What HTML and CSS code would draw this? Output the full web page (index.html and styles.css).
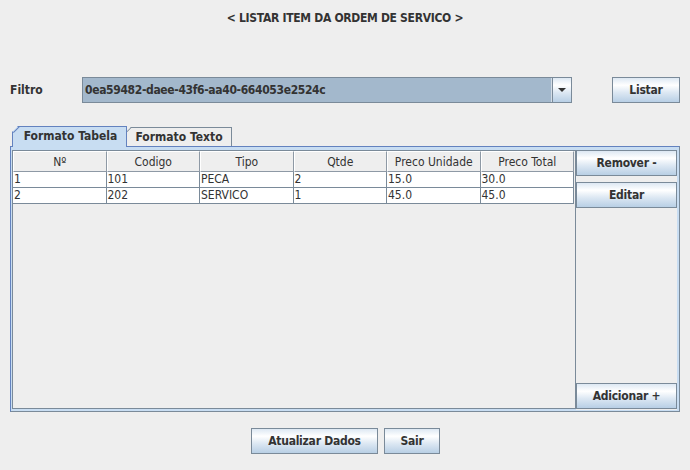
FILE: index.html
```html
<!DOCTYPE html>
<html>
<head>
<meta charset="utf-8">
<link rel="stylesheet" href="styles.css">
</head>
<body>
<div class="window">
  <div class="title">&lt; LISTAR ITEM DA ORDEM DE SERVICO &gt;</div>
  <div class="filter-row">
    <span class="lbl">Filtro</span>
    <div class="combo">
      <div class="combo-value">0ea59482-daee-43f6-aa40-664053e2524c</div>
      <div class="combo-arrow"><svg width="8" height="4" viewBox="0 0 8 4"><path d="M0 0H8L4 4Z" fill="#333"/></svg></div>
    </div>
    <button class="btn btn-listar">Listar</button>
  </div>
  <div class="tabs">
    <div class="tab-strip">
      <div class="tab tab-selected">Formato Tabela</div>
      <div class="tab tab-plain">Formato Texto</div>
    </div>
    <div class="tab-content">
      <div class="scroll">
        <table class="grid">
          <thead>
            <tr><th>Nº</th><th>Codigo</th><th>Tipo</th><th>Qtde</th><th>Preco Unidade</th><th>Preco Total</th></tr>
          </thead>
          <tbody>
            <tr><td>1</td><td>101</td><td>PECA</td><td>2</td><td>15.0</td><td>30.0</td></tr>
            <tr><td>2</td><td>202</td><td>SERVICO</td><td>1</td><td>45.0</td><td>45.0</td></tr>
          </tbody>
        </table>
      </div>
      <div class="side">
        <button class="btn btn-side">Remover -</button>
        <button class="btn btn-side">Editar</button>
        <button class="btn btn-side btn-end">Adicionar +</button>
      </div>
    </div>
  </div>
  <div class="bottom">
    <button class="btn btn-atualizar">Atualizar Dados</button>
    <button class="btn btn-sair">Sair</button>
  </div>
</div>
</body>
</html>
```

FILE: styles.css
```css
* { box-sizing: border-box; }
html, body { margin: 0; padding: 0; }
body {
  background: #eeeeee;
  width: 690px;
  height: 470px;
  overflow: hidden;
  font-family: "DejaVu Sans", "Liberation Sans", sans-serif;
  font-stretch: condensed;
  font-size: 12px;
  color: #333333;
}
.window { width: 690px; height: 470px; }

.title {
  padding-top: 10px;
  height: 36px;
  line-height: 16px;
  text-align: center;
  font-weight: bold;
  letter-spacing: -0.3px;
}

.filter-row {
  display: flex;
  align-items: center;
  margin-top: 41px;
  padding-left: 10px;
  height: 26px;
}
.lbl { width: 72px; font-weight: bold; }
.combo {
  display: flex;
  width: 490px;
  height: 26px;
  border: 1px solid #7a8a99;
}
.combo-value {
  flex: 1;
  background: #a3b8cc;
  border-right: 1px solid #d4dde7;
  padding-left: 2px;
  line-height: 24px;
  font-weight: bold;
  letter-spacing: -0.35px;
  white-space: nowrap;
}
.combo-arrow {
  width: 19px;
  display: flex;
  align-items: center;
  justify-content: center;
  border-left: 1px solid #7a8a99;
  background: linear-gradient(to bottom, #dde8f3 0%, #ffffff 30%, #dde8f3 60%, #b8cfe5 100%);
}

.btn {
  font-family: inherit;
  font-stretch: condensed;
  font-size: 12px;
  font-weight: bold;
  letter-spacing: -0.25px;
  color: #333333;
  border: 1px solid #7a8a99;
  background: linear-gradient(to bottom, #dde8f3 0%, #ffffff 30%, #dde8f3 60%, #b8cfe5 100%);
  height: 26px;
  padding: 0;
  margin: 0;
  border-radius: 0;
  line-height: 24px;
  text-align: center;
}
.btn-listar { width: 68px; margin-left: 40px; }

.tabs { margin-top: 23px; margin-left: 10px; width: 670px; }
.tab-strip {
  display: flex;
  align-items: flex-end;
  padding-left: 2px;
  height: 20px;
}
.tab {
  position: relative;
  font-weight: bold;
  text-align: center;
  white-space: nowrap;
}
.tab-selected {
  width: 115px;
  height: 21px;
  margin-bottom: -1px;
  z-index: 1;
  background: #c8ddf2;
  border: 1px solid #6382bf;
  border-bottom: none;
  line-height: 19px;
  padding-left: 2px;
  clip-path: polygon(6px 0, 100% 0, 100% 100%, 0 100%, 0 6px);
}
.tab-selected::before {
  content: "";
  position: absolute;
  left: -1px;
  top: 2px;
  width: 9px;
  height: 1px;
  background: #6382bf;
  transform: rotate(-45deg);
}
.tab-plain {
  width: 105px;
  height: 19px;
  border: 1px solid #7a8a99;
  border-left: none;
  border-bottom: none;
  line-height: 18px;
  background: #eeeeee;
  clip-path: polygon(4px 0, 100% 0, 100% 100%, 0 100%, 0 4px);
}
.tab-plain::before {
  content: "";
  position: absolute;
  left: -1px;
  top: 1px;
  width: 6px;
  height: 1px;
  background: #7a8a99;
  transform: rotate(-45deg);
}

.tab-content {
  display: flex;
  height: 266px;
  border: 1px solid #6382bf;
  border-right-color: #7a8a99;
  border-bottom-color: #7a8a99;
  background: #c8ddf2;
  padding: 3px 2px 1px 1px;
}
.scroll {
  width: 564px;
  height: 259px;
  border: 1px solid #7a8a99;
  background: #eeeeee;
}
.grid {
  width: 561px;
  table-layout: fixed;
  border-collapse: separate;
  border-spacing: 0;
  font-size: 12px;
}
.grid th {
  height: 21px;
  padding: 0;
  font-weight: normal;
  text-align: center;
  background: #eeeeee;
  border-right: 1px solid #8e99a5;
  border-bottom: 1px solid #8e99a5;
  border-top: 1px solid #ffffff;
  border-left: 1px solid #ffffff;
  line-height: 18px;
}
.grid td {
  height: 16px;
  padding: 0 0 0 1px;
  background: #ffffff;
  border-right: 1px solid #7a8a99;
  border-bottom: 1px solid #7a8a99;
  line-height: 15px;
  white-space: nowrap;
}
.side {
  width: 101px;
  display: flex;
  flex-direction: column;
  gap: 6px;
  background: #eeeeee;
  padding-bottom: 1px;
}
.btn-side { width: 101px; height: 26px; }
.btn-end { margin-top: auto; }

.bottom {
  display: flex;
  justify-content: center;
  gap: 6px;
  margin-top: 16px;
  padding-left: 1px;
}
.btn-atualizar { width: 127px; }
.btn-sair { width: 56px; }
```
